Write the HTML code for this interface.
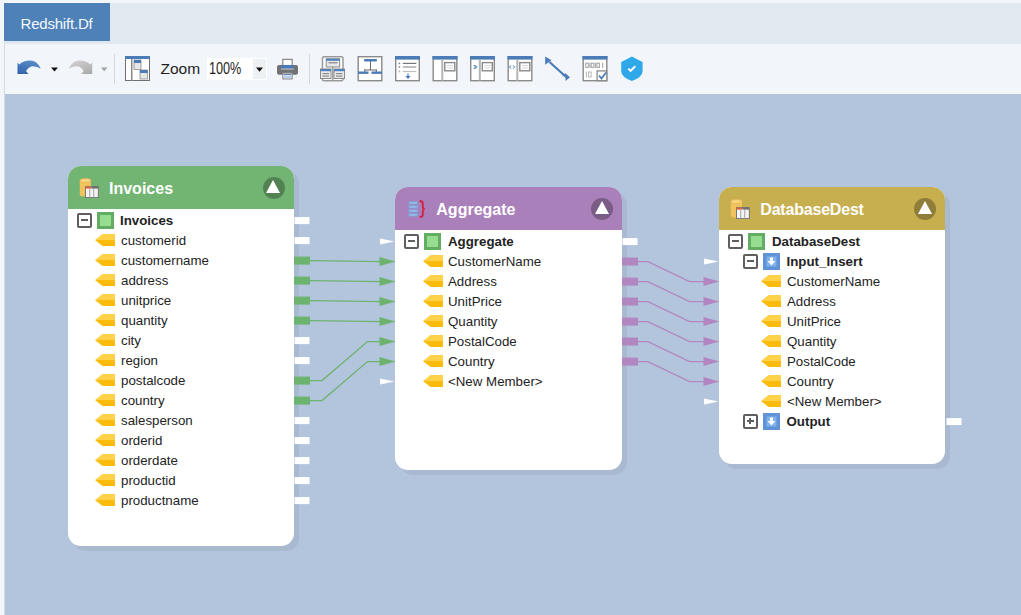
<!DOCTYPE html>
<html><head><meta charset="utf-8">
<style>
*{margin:0;padding:0;box-sizing:border-box}
html,body{width:1021px;height:615px;overflow:hidden;background:#f2f5f9;font-family:"Liberation Sans",sans-serif;position:relative}
.abs{position:absolute}
#strip{left:4px;top:3px;width:1017px;height:41px;background:#e1e8f0}
#tab{left:4px;top:3px;width:106px;height:38px;background:#4d81b8;color:#f4f8fd;font-size:15px;line-height:41px;padding-left:16.5px;letter-spacing:-0.2px}
#tabline{left:4px;top:41px;width:106px;height:2px;background:#dbe8f4}
#toolbar{left:4px;top:44px;width:1017px;height:50px;background:#f2f5f9;border-left:1px solid #d3dae2}
#canvas{left:4px;top:94px;width:1017px;height:521px;background:#b3c5dc;border-left:1px solid #d3dae2}
.box{position:absolute;width:226px;background:#fff;border-radius:13px;box-shadow:5px 5px 0 #a9bad0}
.hdr{position:absolute;left:0;top:0;right:0;height:43px;border-radius:13px 13px 0 0;box-shadow:0 1px 0 rgba(255,255,255,0.6)}
.ttl{position:absolute;left:41px;top:0;height:43px;line-height:43px;color:#fff;font-size:16px;font-weight:bold;transform:scaleY(1.06);transform-origin:0 28px;top:1px}
.circ{position:absolute;right:9.3px;top:10.8px;width:22px;height:22px;border-radius:50%;background:rgba(0,0,0,0.28)}
.circ:after{content:"";position:absolute;left:3.6px;top:3.4px;border-left:7.5px solid transparent;border-right:7.5px solid transparent;border-bottom:13.5px solid #fff}
.row{position:absolute;height:20px;line-height:20px;font-size:13.3px;color:#232323;white-space:nowrap}
.b{font-weight:bold}
.mbox{position:absolute;width:14.5px;height:14.5px;border:2px solid #5f5f5f;border-radius:2px;background:#fff}
.mbox:after{content:"";position:absolute;left:1.5px;top:4px;width:7px;height:2px;background:#5f5f5f}
.pbox:before{content:"";position:absolute;left:4px;top:2px;width:2px;height:6px;background:#5f5f5f}
.gsq{position:absolute;width:17px;height:17px;background:#97dd90;border:3px solid #63ad63}
.bsq{position:absolute;width:17px;height:17px;background:#6fa3e3;border:2px solid #5a8fd3}
.fld{position:absolute}
.conn{position:absolute;width:15px;height:7px;background:#fff}
</style></head><body>
<div id="strip" class="abs"></div>
<div id="tab" class="abs">Redshift.Df</div>
<div id="tabline" class="abs"></div>
<div id="toolbar" class="abs"></div>
<div id="canvas" class="abs"></div>
<svg class="abs" style="left:0;top:44px" width="1021" height="50" viewBox="0 44 1021 50">
  <!-- undo -->
  <defs><linearGradient id="ug" x1="0" y1="1" x2="0.6" y2="0"><stop offset="0" stop-color="#2f62aa"/><stop offset="1" stop-color="#5a8cc8"/></linearGradient><linearGradient id="rg" x1="1" y1="1" x2="0.4" y2="0"><stop offset="0" stop-color="#a8a8a8"/><stop offset="1" stop-color="#cdcdcd"/></linearGradient></defs><path d="M17.5,62.6 L17.5,74 L28.5,74 L26,71 Q29,66.5 33,66.3 Q37.5,66.3 40.8,68.8 Q37,60.4 30,60.6 Q23.5,60.8 19.2,64.4 Z" fill="url(#ug)"/>
  <path d="M51,67.6 L58,67.6 L54.5,71.6 Z" fill="#111"/>
  <!-- redo -->
  <path d="M92.2,62.6 L92.2,74 L81.2,74 L83.7,71 Q80.7,66.5 76.7,66.3 Q72.2,66.3 68.9,68.8 Q72.7,60.4 79.7,60.6 Q86.2,60.8 90.5,64.4 Z" fill="url(#rg)"/>
  <path d="M101,67.6 L107.5,67.6 L104.2,71.3 Z" fill="#a0a0a0"/>
  <rect x="114" y="54" width="1" height="30" fill="#d3d7dc"/>
  <!-- layout icon -->
  <rect x="125.5" y="56.5" width="24" height="24" fill="#fff" stroke="#707070" stroke-width="1"/>
  <rect x="125" y="56" width="25" height="3" fill="#4b7cb8"/>
  <rect x="131" y="59" width="1.5" height="22" fill="#8a8a8a"/>
  <rect x="134" y="60" width="7" height="9.5" fill="#e6e6e6" stroke="#8a8a8a" stroke-width="0.8"/>
  <rect x="134" y="60" width="7" height="3" fill="#4b7cb8"/>
  <rect x="140" y="70" width="7.5" height="9" fill="#e6e6e6" stroke="#8a8a8a" stroke-width="0.8"/>
  <rect x="140" y="70" width="7.5" height="3" fill="#4b7cb8"/>
  <!-- printer -->
  <rect x="282.8" y="59.4" width="9.4" height="6.2" fill="#fff" stroke="#8d8d8d" stroke-width="1.3"/>
  <rect x="277" y="65" width="21" height="9.7" rx="2" fill="#727272"/>
  <rect x="281" y="65" width="12.7" height="3.6" fill="#4a7ab8"/>
  <rect x="281" y="68.6" width="12.7" height="0.9" fill="#cfd8e2"/>
  <rect x="282.9" y="73.1" width="9.2" height="5.8" fill="#fff" stroke="#8d8d8d" stroke-width="1.2"/>
  <rect x="283.6" y="74" width="7.8" height="1.2" fill="#5f8cc4"/>
  <rect x="283.6" y="75.6" width="7.8" height="2.6" fill="#b9d0ea"/>
  <rect x="309" y="54" width="1" height="30" fill="#d3d7dc"/>

  <!-- icon1 hierarchy -->
  <g transform="translate(320,56)">
    <rect x="2.5" y="0.8" width="20.5" height="24" rx="1.5" fill="#fff" stroke="#9a9a9a" stroke-width="1.5"/>
    <rect x="6.2" y="2.8" width="13.5" height="8.2" fill="#e8e8e8" stroke="#8a8a8a" stroke-width="1"/>
    <rect x="6.2" y="2.8" width="13.5" height="2" fill="#4f82bf"/>
    <rect x="8.5" y="6" width="9" height="1.5" fill="#9a9a9a"/>
    <rect x="12.2" y="11" width="1.2" height="13" fill="#8a8a8a"/>
    <rect x="0.5" y="13" width="10.5" height="9.5" fill="#eaeaea" stroke="#8a8a8a" stroke-width="1"/>
    <rect x="0.5" y="13" width="10.5" height="2.2" fill="#4f82bf"/>
    <rect x="2.5" y="17" width="6.5" height="1.2" fill="#8a8a8a"/><rect x="2.5" y="19.5" width="6.5" height="1.2" fill="#8a8a8a"/>
    <rect x="14" y="13" width="10.5" height="9.5" fill="#eaeaea" stroke="#8a8a8a" stroke-width="1"/>
    <rect x="14" y="13" width="10.5" height="2.2" fill="#4f82bf"/>
    <rect x="16" y="17" width="6.5" height="1.2" fill="#8a8a8a"/><rect x="16" y="19.5" width="6.5" height="1.2" fill="#8a8a8a"/>
  </g>
  <!-- icon2 T -->
  <g transform="translate(357.5,56)">
    <rect x="0.7" y="0.7" width="23.6" height="24" fill="#fff" stroke="#8a8a8a" stroke-width="1.4"/>
    <rect x="6.5" y="3" width="13" height="2.4" rx="1" fill="#4b7cb8"/>
    <rect x="12.5" y="5" width="1" height="9" fill="#666"/>
    <rect x="6.8" y="13.5" width="12.5" height="1" fill="#666"/>
    <rect x="6.8" y="13.5" width="1" height="2.5" fill="#666"/><rect x="18.3" y="13.5" width="1" height="2.5" fill="#666"/>
    <rect x="0.5" y="15.5" width="10.5" height="2.4" fill="#4b7cb8"/>
    <rect x="14" y="15.5" width="10.5" height="2.4" fill="#4b7cb8"/>
  </g>
  <!-- icon3 list -->
  <g transform="translate(395,56)">
    <rect x="0.7" y="0.7" width="23.6" height="24" fill="#fff" stroke="#8a8a8a" stroke-width="1.4"/>
    <rect x="0" y="0" width="25" height="3.6" fill="#4b7cb8"/>
    <circle cx="4.4" cy="7.4" r="0.9" fill="#888"/><rect x="7.8" y="6.8" width="13.5" height="1.2" fill="#777"/>
    <circle cx="4.4" cy="11" r="0.9" fill="#999"/><rect x="7.8" y="10.4" width="13.5" height="1.2" fill="#999"/>
    <circle cx="4.4" cy="15.5" r="0.9" fill="#bbb"/><rect x="7.8" y="14.9" width="13.5" height="1.2" fill="#c0c0c0"/>
    <rect x="12.4" y="17.5" width="1.2" height="4" fill="#4b7cb8"/>
    <path d="M10.3,20 L15.7,20 L13,23 Z" fill="#4b7cb8"/>
  </g>
  <!-- icon4 -->
  <g transform="translate(432.5,56)">
    <rect x="0.7" y="0.7" width="23.6" height="24" fill="#fff" stroke="#8a8a8a" stroke-width="1.4"/>
    <rect x="0" y="0" width="25" height="3.6" fill="#4b7cb8"/>
    <rect x="8.8" y="3.6" width="2" height="21" fill="#b5b5b5"/>
    <rect x="12.3" y="6.6" width="10" height="8.2" fill="#fff" stroke="#8a8a8a" stroke-width="1.4"/>
    <rect x="14.5" y="9" width="6" height="0.8" fill="#ccc"/><rect x="14.5" y="11.5" width="6" height="0.8" fill="#ccc"/>
  </g>
  <!-- icon5 -->
  <g transform="translate(470,56)">
    <rect x="0.7" y="0.7" width="23.6" height="24" fill="#fff" stroke="#8a8a8a" stroke-width="1.4"/>
    <rect x="0" y="0" width="25" height="3.6" fill="#4b7cb8"/>
    <rect x="8.8" y="3.6" width="2" height="21" fill="#b5b5b5"/>
    <rect x="12.3" y="6.6" width="10" height="8.2" fill="#fff" stroke="#8a8a8a" stroke-width="1.4"/>
    <rect x="14.5" y="9" width="6" height="0.8" fill="#ccc"/><rect x="14.5" y="11.5" width="6" height="0.8" fill="#ccc"/>
    <path d="M3,9 L5.5,9 L7.5,11 L5.5,13 L3,13 L5,11 Z" fill="#6a98cf"/>
  </g>
  <!-- icon6 -->
  <g transform="translate(507.5,56)">
    <rect x="0.7" y="0.7" width="23.6" height="24" fill="#fff" stroke="#8a8a8a" stroke-width="1.4"/>
    <rect x="0" y="0" width="25" height="3.6" fill="#4b7cb8"/>
    <rect x="8.8" y="3.6" width="2" height="21" fill="#b5b5b5"/>
    <rect x="12.3" y="6.6" width="10" height="8.2" fill="#fff" stroke="#8a8a8a" stroke-width="1.4"/>
    <rect x="14.5" y="9" width="6" height="0.8" fill="#ccc"/><rect x="14.5" y="11.5" width="6" height="0.8" fill="#ccc"/>
    <path d="M1.2,11 L3.5,9 L4,9 L2.8,11 L4,13 L3.5,13 Z" fill="#6a98cf"/>
    <path d="M5,9 L5.6,9 L8,11 L5.6,13 L5,13 L6.4,11 Z" fill="#6a98cf"/>
  </g>
  <!-- line icon -->
  <g transform="translate(545,56)">
    <path d="M4.5,6 L19.5,19.5" stroke="#4a7ab3" stroke-width="2.2"/>
    <path d="M0.2,0.4 L0.2,8.7 L6.5,4.2 Z" fill="#4b7cb8"/>
    <path d="M20.5,17.6 L25,21.2 L20.5,25.1 Z" fill="#4b7cb8"/>
    <path d="M17,19 L21,17.2 L21,22 Z" fill="#4b7cb8"/>
  </g>
  <!-- binary icon -->
  <g transform="translate(582.5,56)">
    <rect x="0.7" y="0.7" width="23.6" height="24" fill="#fff" stroke="#8a8a8a" stroke-width="1.4"/>
    <rect x="0" y="0" width="25" height="3.6" fill="#4b7cb8"/>
    <g fill="none" stroke="#a8a8a8" stroke-width="1.1">
    <rect x="3.2" y="7.2" width="2.6" height="4.2"/><rect x="8.7" y="7.2" width="2.6" height="4.2"/><rect x="14.3" y="7.2" width="2.6" height="4.2"/></g>
    <g fill="#a8a8a8"><rect x="6.9" y="6.7" width="1.1" height="5.2"/><rect x="12.3" y="6.7" width="1.1" height="5.2"/><rect x="19.6" y="6.7" width="1.1" height="5.2"/></g>
    <g fill="none" stroke="#bdbdbd" stroke-width="1.1"><rect x="6" y="16" width="2.6" height="5"/></g>
    <rect x="3.4" y="15.5" width="1.1" height="6" fill="#bdbdbd"/>
    <rect x="14.6" y="14.9" width="9.7" height="9.8" fill="#fff" stroke="#8a8a8a" stroke-width="1.3"/>
    <path d="M16.5,19.5 L19,22.5 L23.5,16.5" stroke="#4b7cb8" stroke-width="1.8" fill="none"/>
  </g>
  <!-- shield -->
  <g transform="translate(621,56)">
    <path d="M10.9,0.6 Q16,3.4 21.6,6 L21.6,15 Q21.6,21 10.9,25 Q0.2,21 0.2,15 L0.2,6 Q5.8,3.4 10.9,0.6 Z" fill="#2fa8ea"/>
    <path d="M7.3,12.6 L9.6,14.8 L14.3,10.3" stroke="#fff" stroke-width="2" fill="none"/>
  </g>
</svg>
<div class="abs" style="left:160.5px;top:58.5px;font-size:15.5px;line-height:20px;color:#1e1e1e">Zoom</div>
<div class="abs" style="left:207px;top:58px;width:60px;height:22px;background:#fff"></div>
<div class="abs" style="left:253px;top:59px;width:13px;height:20px;background:#eef1f4"></div>
<div class="abs" style="left:209px;top:59.4px;font-size:16px;line-height:20px;color:#1e1e1e;transform:scaleX(0.79);transform-origin:0 0">100%</div>
<svg class="abs" style="left:256px;top:67px" width="8" height="6"><path d="M0,0.5 L7,0.5 L3.5,4.8 Z" fill="#111"/></svg>

<div class="box" style="left:68px;top:166px;height:380px">
  <div class="hdr" style="background:#72b573"></div>
  <div class="ttl">Invoices</div>
  <div class="circ"></div>
</div>
<div class="box" style="left:395.3px;top:187px;height:283px;width:227px">
  <div class="hdr" style="background:#a980ba"></div>
  <div class="ttl">Aggregate</div>
  <div class="circ"></div>
</div>
<div class="box" style="left:719.3px;top:187px;height:277px">
  <div class="hdr" style="background:#c7ae4f"></div>
  <div class="ttl" style="letter-spacing:-0.2px">DatabaseDest</div>
  <div class="circ"></div>
</div>
<svg class="abs" style="left:79px;top:178px" width="20" height="20" viewBox="0 0 20 20">
  <path d="M0.8,2.6 L0.8,16.8 Q0.8,18.6 6.4,18.6 Q12,18.6 12,16.8 L12,2.6 Z" fill="#f2c35c"/>
  <ellipse cx="6.4" cy="2.6" rx="5.6" ry="2.1" fill="#f7d47e" stroke="#e8b550" stroke-width="0.8"/>
  <rect x="6.5" y="8.6" width="12.8" height="11" fill="#f4f4f4" stroke="#6e6e6e" stroke-width="0.9"/>
  <rect x="6.5" y="8.6" width="6" height="2" fill="#e0643a"/>
  <rect x="12.5" y="8.6" width="6.8" height="2" fill="#6e6e6e"/>
  <rect x="10.3" y="10.6" width="0.9" height="9" fill="#9a9a9a"/>
  <rect x="14.3" y="10.6" width="0.9" height="9" fill="#9a9a9a"/>
</svg>
<svg class="abs" style="left:730px;top:199px" width="20" height="20" viewBox="0 0 20 20">
  <path d="M0.8,2.6 L0.8,16.8 Q0.8,18.6 6.4,18.6 Q12,18.6 12,16.8 L12,2.6 Z" fill="#f2c35c"/>
  <ellipse cx="6.4" cy="2.6" rx="5.6" ry="2.1" fill="#f7d47e" stroke="#e8b550" stroke-width="0.8"/>
  <rect x="6.5" y="8.6" width="12.8" height="11" fill="#f4f4f4" stroke="#6e6e6e" stroke-width="0.9"/>
  <rect x="6.5" y="8.6" width="6" height="2" fill="#e0643a"/>
  <rect x="12.5" y="8.6" width="6.8" height="2" fill="#6e6e6e"/>
  <rect x="10.3" y="10.6" width="0.9" height="9" fill="#9a9a9a"/>
  <rect x="14.3" y="10.6" width="0.9" height="9" fill="#9a9a9a"/>
</svg>
<svg class="abs" style="left:407px;top:200px" width="20" height="20" viewBox="0 0 20 20">
  <rect x="1.3" y="1.4" width="9.7" height="3" fill="#7aa6dc"/>
  <rect x="1.3" y="5.4" width="9.7" height="3" fill="#7aa6dc"/>
  <rect x="1.3" y="9.4" width="9.7" height="3" fill="#7aa6dc"/>
  <rect x="1.3" y="13.4" width="9.7" height="3" fill="#7aa6dc"/>
  <rect x="2.5" y="2.4" width="7.3" height="1" fill="#a9c8ee"/>
  <rect x="2.5" y="6.4" width="7.3" height="1" fill="#a9c8ee"/>
  <rect x="2.5" y="10.4" width="7.3" height="1" fill="#a9c8ee"/>
  <rect x="2.5" y="14.4" width="7.3" height="1" fill="#a9c8ee"/>
  <path d="M12.6,1 Q15.8,1 15.8,3.5 L15.8,7 Q15.8,8.7 17.6,9 Q15.8,9.3 15.8,11 L15.8,14.5 Q15.8,17.2 12.6,17.2" stroke="#d0213c" stroke-width="1.8" fill="none"/>
</svg>

<svg class="abs" style="left:0;top:0" width="1021" height="615" viewBox="0 0 1021 615"><g transform="translate(0,0.6)"><rect x="294.5" y="216.5" width="15" height="7" fill="#fff"/>
<rect x="294.5" y="236.5" width="15" height="7" fill="#fff"/>
<rect x="294" y="256" width="16" height="8" fill="#6cb36f"/>
<rect x="294" y="276" width="16" height="8" fill="#6cb36f"/>
<rect x="294" y="296" width="16" height="8" fill="#6cb36f"/>
<rect x="294" y="316" width="16" height="8" fill="#6cb36f"/>
<rect x="294.5" y="336.5" width="15" height="7" fill="#fff"/>
<rect x="294.5" y="356.5" width="15" height="7" fill="#fff"/>
<rect x="294" y="376" width="16" height="8" fill="#6cb36f"/>
<rect x="294" y="396" width="16" height="8" fill="#6cb36f"/>
<rect x="294.5" y="416.5" width="15" height="7" fill="#fff"/>
<rect x="294.5" y="436.5" width="15" height="7" fill="#fff"/>
<rect x="294.5" y="456.5" width="15" height="7" fill="#fff"/>
<rect x="294.5" y="476.5" width="15" height="7" fill="#fff"/>
<rect x="294.5" y="496.5" width="15" height="7" fill="#fff"/>
<path d="M310,260 L381,261" stroke="#6cb36f" stroke-width="1.3" fill="none"/>
<path d="M379.5,256.5 L395.5,261 L379.5,265.5 Z" fill="#6cb36f"/>
<path d="M310,280 L381,281" stroke="#6cb36f" stroke-width="1.3" fill="none"/>
<path d="M379.5,276.5 L395.5,281 L379.5,285.5 Z" fill="#6cb36f"/>
<path d="M310,300 L381,301" stroke="#6cb36f" stroke-width="1.3" fill="none"/>
<path d="M379.5,296.5 L395.5,301 L379.5,305.5 Z" fill="#6cb36f"/>
<path d="M310,320 L381,321" stroke="#6cb36f" stroke-width="1.3" fill="none"/>
<path d="M379.5,316.5 L395.5,321 L379.5,325.5 Z" fill="#6cb36f"/>
<path d="M310,380 L322,380 L367.5,341 L381,341" stroke="#6cb36f" stroke-width="1.3" fill="none"/>
<path d="M379.5,336.5 L395.5,341 L379.5,345.5 Z" fill="#6cb36f"/>
<path d="M310,400 L322,400 L367.5,361 L381,361" stroke="#6cb36f" stroke-width="1.3" fill="none"/>
<path d="M379.5,356.5 L395.5,361 L379.5,365.5 Z" fill="#6cb36f"/>
<path d="M380,238 L394.5,241 L380,244 Z" fill="#fff"/>
<path d="M380,378 L394.5,381 L380,384 Z" fill="#fff"/>
<rect x="622.5" y="237.5" width="15" height="7" fill="#fff"/>
<rect x="622" y="257" width="16" height="8" fill="#b286c1"/>
<path d="M638,261 L648,261 L689.5,281 L705,281" stroke="#b286c1" stroke-width="1.3" fill="none"/>
<path d="M703.5,276.5 L719.5,281 L703.5,285.5 Z" fill="#b286c1"/>
<rect x="622" y="277" width="16" height="8" fill="#b286c1"/>
<path d="M638,281 L648,281 L689.5,301 L705,301" stroke="#b286c1" stroke-width="1.3" fill="none"/>
<path d="M703.5,296.5 L719.5,301 L703.5,305.5 Z" fill="#b286c1"/>
<rect x="622" y="297" width="16" height="8" fill="#b286c1"/>
<path d="M638,301 L648,301 L689.5,321 L705,321" stroke="#b286c1" stroke-width="1.3" fill="none"/>
<path d="M703.5,316.5 L719.5,321 L703.5,325.5 Z" fill="#b286c1"/>
<rect x="622" y="317" width="16" height="8" fill="#b286c1"/>
<path d="M638,321 L648,321 L689.5,341 L705,341" stroke="#b286c1" stroke-width="1.3" fill="none"/>
<path d="M703.5,336.5 L719.5,341 L703.5,345.5 Z" fill="#b286c1"/>
<rect x="622" y="337" width="16" height="8" fill="#b286c1"/>
<path d="M638,341 L648,341 L689.5,361 L705,361" stroke="#b286c1" stroke-width="1.3" fill="none"/>
<path d="M703.5,356.5 L719.5,361 L703.5,365.5 Z" fill="#b286c1"/>
<rect x="622" y="357" width="16" height="8" fill="#b286c1"/>
<path d="M638,361 L648,361 L689.5,381 L705,381" stroke="#b286c1" stroke-width="1.3" fill="none"/>
<path d="M703.5,376.5 L719.5,381 L703.5,385.5 Z" fill="#b286c1"/>
<path d="M704,258 L718.5,261 L704,264 Z" fill="#fff"/>
<path d="M704,398 L718.5,401 L704,404 Z" fill="#fff"/>
<rect x="946.5" y="417.5" width="15" height="7" fill="#fff"/></g></svg>
<div class="mbox" style="left:77px;top:213px"></div>
<div class="gsq" style="left:97px;top:211.5px"></div>
<div class="row b" style="left:120px;top:211px">Invoices</div>
<svg class="fld" style="left:95px;top:234px" width="20" height="12" viewBox="0 0 20 12"><path d="M0,6 L7.5,0 L20,0 L20,6 Z" fill="#ffd24a"/><path d="M0,6 L20,6 L20,12 L7.5,12 Z" fill="#fbbb0c"/></svg>
<div class="row" style="left:121px;top:231px">customerid</div>
<svg class="fld" style="left:95px;top:254px" width="20" height="12" viewBox="0 0 20 12"><path d="M0,6 L7.5,0 L20,0 L20,6 Z" fill="#ffd24a"/><path d="M0,6 L20,6 L20,12 L7.5,12 Z" fill="#fbbb0c"/></svg>
<div class="row" style="left:121px;top:251px">customername</div>
<svg class="fld" style="left:95px;top:274px" width="20" height="12" viewBox="0 0 20 12"><path d="M0,6 L7.5,0 L20,0 L20,6 Z" fill="#ffd24a"/><path d="M0,6 L20,6 L20,12 L7.5,12 Z" fill="#fbbb0c"/></svg>
<div class="row" style="left:121px;top:271px">address</div>
<svg class="fld" style="left:95px;top:294px" width="20" height="12" viewBox="0 0 20 12"><path d="M0,6 L7.5,0 L20,0 L20,6 Z" fill="#ffd24a"/><path d="M0,6 L20,6 L20,12 L7.5,12 Z" fill="#fbbb0c"/></svg>
<div class="row" style="left:121px;top:291px">unitprice</div>
<svg class="fld" style="left:95px;top:314px" width="20" height="12" viewBox="0 0 20 12"><path d="M0,6 L7.5,0 L20,0 L20,6 Z" fill="#ffd24a"/><path d="M0,6 L20,6 L20,12 L7.5,12 Z" fill="#fbbb0c"/></svg>
<div class="row" style="left:121px;top:311px">quantity</div>
<svg class="fld" style="left:95px;top:334px" width="20" height="12" viewBox="0 0 20 12"><path d="M0,6 L7.5,0 L20,0 L20,6 Z" fill="#ffd24a"/><path d="M0,6 L20,6 L20,12 L7.5,12 Z" fill="#fbbb0c"/></svg>
<div class="row" style="left:121px;top:331px">city</div>
<svg class="fld" style="left:95px;top:354px" width="20" height="12" viewBox="0 0 20 12"><path d="M0,6 L7.5,0 L20,0 L20,6 Z" fill="#ffd24a"/><path d="M0,6 L20,6 L20,12 L7.5,12 Z" fill="#fbbb0c"/></svg>
<div class="row" style="left:121px;top:351px">region</div>
<svg class="fld" style="left:95px;top:374px" width="20" height="12" viewBox="0 0 20 12"><path d="M0,6 L7.5,0 L20,0 L20,6 Z" fill="#ffd24a"/><path d="M0,6 L20,6 L20,12 L7.5,12 Z" fill="#fbbb0c"/></svg>
<div class="row" style="left:121px;top:371px">postalcode</div>
<svg class="fld" style="left:95px;top:394px" width="20" height="12" viewBox="0 0 20 12"><path d="M0,6 L7.5,0 L20,0 L20,6 Z" fill="#ffd24a"/><path d="M0,6 L20,6 L20,12 L7.5,12 Z" fill="#fbbb0c"/></svg>
<div class="row" style="left:121px;top:391px">country</div>
<svg class="fld" style="left:95px;top:414px" width="20" height="12" viewBox="0 0 20 12"><path d="M0,6 L7.5,0 L20,0 L20,6 Z" fill="#ffd24a"/><path d="M0,6 L20,6 L20,12 L7.5,12 Z" fill="#fbbb0c"/></svg>
<div class="row" style="left:121px;top:411px">salesperson</div>
<svg class="fld" style="left:95px;top:434px" width="20" height="12" viewBox="0 0 20 12"><path d="M0,6 L7.5,0 L20,0 L20,6 Z" fill="#ffd24a"/><path d="M0,6 L20,6 L20,12 L7.5,12 Z" fill="#fbbb0c"/></svg>
<div class="row" style="left:121px;top:431px">orderid</div>
<svg class="fld" style="left:95px;top:454px" width="20" height="12" viewBox="0 0 20 12"><path d="M0,6 L7.5,0 L20,0 L20,6 Z" fill="#ffd24a"/><path d="M0,6 L20,6 L20,12 L7.5,12 Z" fill="#fbbb0c"/></svg>
<div class="row" style="left:121px;top:451px">orderdate</div>
<svg class="fld" style="left:95px;top:474px" width="20" height="12" viewBox="0 0 20 12"><path d="M0,6 L7.5,0 L20,0 L20,6 Z" fill="#ffd24a"/><path d="M0,6 L20,6 L20,12 L7.5,12 Z" fill="#fbbb0c"/></svg>
<div class="row" style="left:121px;top:471px">productid</div>
<svg class="fld" style="left:95px;top:494px" width="20" height="12" viewBox="0 0 20 12"><path d="M0,6 L7.5,0 L20,0 L20,6 Z" fill="#ffd24a"/><path d="M0,6 L20,6 L20,12 L7.5,12 Z" fill="#fbbb0c"/></svg>
<div class="row" style="left:121px;top:491px">productname</div>
<div class="mbox" style="left:404px;top:234px"></div>
<div class="gsq" style="left:424px;top:232.5px"></div>
<div class="row b" style="left:448px;top:232px">Aggregate</div>
<svg class="fld" style="left:423px;top:255px" width="20" height="12" viewBox="0 0 20 12"><path d="M0,6 L7.5,0 L20,0 L20,6 Z" fill="#ffd24a"/><path d="M0,6 L20,6 L20,12 L7.5,12 Z" fill="#fbbb0c"/></svg>
<div class="row" style="left:448px;top:252px">CustomerName</div>
<svg class="fld" style="left:423px;top:275px" width="20" height="12" viewBox="0 0 20 12"><path d="M0,6 L7.5,0 L20,0 L20,6 Z" fill="#ffd24a"/><path d="M0,6 L20,6 L20,12 L7.5,12 Z" fill="#fbbb0c"/></svg>
<div class="row" style="left:448px;top:272px">Address</div>
<svg class="fld" style="left:423px;top:295px" width="20" height="12" viewBox="0 0 20 12"><path d="M0,6 L7.5,0 L20,0 L20,6 Z" fill="#ffd24a"/><path d="M0,6 L20,6 L20,12 L7.5,12 Z" fill="#fbbb0c"/></svg>
<div class="row" style="left:448px;top:292px">UnitPrice</div>
<svg class="fld" style="left:423px;top:315px" width="20" height="12" viewBox="0 0 20 12"><path d="M0,6 L7.5,0 L20,0 L20,6 Z" fill="#ffd24a"/><path d="M0,6 L20,6 L20,12 L7.5,12 Z" fill="#fbbb0c"/></svg>
<div class="row" style="left:448px;top:312px">Quantity</div>
<svg class="fld" style="left:423px;top:335px" width="20" height="12" viewBox="0 0 20 12"><path d="M0,6 L7.5,0 L20,0 L20,6 Z" fill="#ffd24a"/><path d="M0,6 L20,6 L20,12 L7.5,12 Z" fill="#fbbb0c"/></svg>
<div class="row" style="left:448px;top:332px">PostalCode</div>
<svg class="fld" style="left:423px;top:355px" width="20" height="12" viewBox="0 0 20 12"><path d="M0,6 L7.5,0 L20,0 L20,6 Z" fill="#ffd24a"/><path d="M0,6 L20,6 L20,12 L7.5,12 Z" fill="#fbbb0c"/></svg>
<div class="row" style="left:448px;top:352px">Country</div>
<svg class="fld" style="left:423px;top:375px" width="20" height="12" viewBox="0 0 20 12"><path d="M0,6 L7.5,0 L20,0 L20,6 Z" fill="#ffd24a"/><path d="M0,6 L20,6 L20,12 L7.5,12 Z" fill="#fbbb0c"/></svg>
<div class="row" style="left:448px;top:372px">&lt;New Member&gt;</div>
<div class="mbox" style="left:728px;top:234px"></div>
<div class="gsq" style="left:748px;top:232.5px"></div>
<div class="row b" style="left:772px;top:232px">DatabaseDest</div>
<div class="mbox" style="left:743px;top:254px"></div>
<svg class="abs" style="left:762.5px;top:252.5px" width="17" height="17" viewBox="0 0 17 17"><rect x="0" y="0" width="17" height="17" fill="#5f93d6"/><rect x="3.5" y="3.5" width="10" height="10" fill="#80b2ee"/><path d="M7,4.5 L10,4.5 L10,8 L12.5,8 L8.5,12.5 L4.5,8 L7,8 Z" fill="#fff"/></svg>
<div class="row b" style="left:786.5px;top:252px">Input_Insert</div>
<svg class="fld" style="left:761px;top:275px" width="20" height="12" viewBox="0 0 20 12"><path d="M0,6 L7.5,0 L20,0 L20,6 Z" fill="#ffd24a"/><path d="M0,6 L20,6 L20,12 L7.5,12 Z" fill="#fbbb0c"/></svg>
<div class="row" style="left:787px;top:272px">CustomerName</div>
<svg class="fld" style="left:761px;top:295px" width="20" height="12" viewBox="0 0 20 12"><path d="M0,6 L7.5,0 L20,0 L20,6 Z" fill="#ffd24a"/><path d="M0,6 L20,6 L20,12 L7.5,12 Z" fill="#fbbb0c"/></svg>
<div class="row" style="left:787px;top:292px">Address</div>
<svg class="fld" style="left:761px;top:315px" width="20" height="12" viewBox="0 0 20 12"><path d="M0,6 L7.5,0 L20,0 L20,6 Z" fill="#ffd24a"/><path d="M0,6 L20,6 L20,12 L7.5,12 Z" fill="#fbbb0c"/></svg>
<div class="row" style="left:787px;top:312px">UnitPrice</div>
<svg class="fld" style="left:761px;top:335px" width="20" height="12" viewBox="0 0 20 12"><path d="M0,6 L7.5,0 L20,0 L20,6 Z" fill="#ffd24a"/><path d="M0,6 L20,6 L20,12 L7.5,12 Z" fill="#fbbb0c"/></svg>
<div class="row" style="left:787px;top:332px">Quantity</div>
<svg class="fld" style="left:761px;top:355px" width="20" height="12" viewBox="0 0 20 12"><path d="M0,6 L7.5,0 L20,0 L20,6 Z" fill="#ffd24a"/><path d="M0,6 L20,6 L20,12 L7.5,12 Z" fill="#fbbb0c"/></svg>
<div class="row" style="left:787px;top:352px">PostalCode</div>
<svg class="fld" style="left:761px;top:375px" width="20" height="12" viewBox="0 0 20 12"><path d="M0,6 L7.5,0 L20,0 L20,6 Z" fill="#ffd24a"/><path d="M0,6 L20,6 L20,12 L7.5,12 Z" fill="#fbbb0c"/></svg>
<div class="row" style="left:787px;top:372px">Country</div>
<svg class="fld" style="left:761px;top:395px" width="20" height="12" viewBox="0 0 20 12"><path d="M0,6 L7.5,0 L20,0 L20,6 Z" fill="#ffd24a"/><path d="M0,6 L20,6 L20,12 L7.5,12 Z" fill="#fbbb0c"/></svg>
<div class="row" style="left:787px;top:392px">&lt;New Member&gt;</div>
<div class="mbox pbox" style="left:743px;top:414px"></div>
<svg class="abs" style="left:762.5px;top:412.5px" width="17" height="17" viewBox="0 0 17 17"><rect x="0" y="0" width="17" height="17" fill="#5f93d6"/><rect x="3.5" y="3.5" width="10" height="10" fill="#80b2ee"/><path d="M7,4.5 L10,4.5 L10,8 L12.5,8 L8.5,12.5 L4.5,8 L7,8 Z" fill="#fff"/></svg>
<div class="row b" style="left:786.5px;top:412px">Output</div>
</body></html>
